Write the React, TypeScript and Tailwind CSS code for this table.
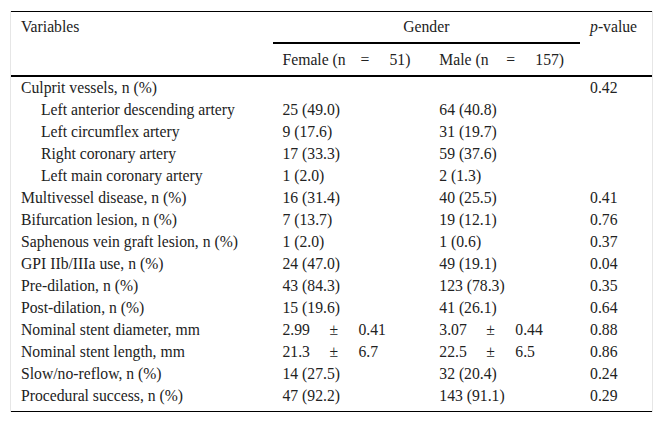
import React from "react";

interface Row {
  label: string;
  female?: string | [string, string];
  male?: string | [string, string];
  p?: string;
  sub?: boolean;
}

const rows: Row[] = [
  { label: "Culprit vessels, n (%)", p: "0.42" },
  { label: "Left anterior descending artery", female: "25 (49.0)", male: "64 (40.8)", sub: true },
  { label: "Left circumflex artery", female: "9 (17.6)", male: "31 (19.7)", sub: true },
  { label: "Right coronary artery", female: "17 (33.3)", male: "59 (37.6)", sub: true },
  { label: "Left main coronary artery", female: "1 (2.0)", male: "2 (1.3)", sub: true },
  { label: "Multivessel disease, n (%)", female: "16 (31.4)", male: "40 (25.5)", p: "0.41" },
  { label: "Bifurcation lesion, n (%)", female: "7 (13.7)", male: "19 (12.1)", p: "0.76" },
  { label: "Saphenous vein graft lesion, n (%)", female: "1 (2.0)", male: "1 (0.6)", p: "0.37" },
  { label: "GPI IIb/IIIa use, n (%)", female: "24 (47.0)", male: "49 (19.1)", p: "0.04" },
  { label: "Pre-dilation, n (%)", female: "43 (84.3)", male: "123 (78.3)", p: "0.35" },
  { label: "Post-dilation, n (%)", female: "15 (19.6)", male: "41 (26.1)", p: "0.64" },
  { label: "Nominal stent diameter, mm", female: ["2.99", "0.41"], male: ["3.07", "0.44"], p: "0.88" },
  { label: "Nominal stent length, mm", female: ["21.3", "6.7"], male: ["22.5", "6.5"], p: "0.86" },
  { label: "Slow/no-reflow, n (%)", female: "14 (27.5)", male: "32 (20.4)", p: "0.24" },
  { label: "Procedural success, n (%)", female: "47 (92.2)", male: "143 (91.1)", p: "0.29" },
];

function Cell({ value }: { value?: string | [string, string] }) {
  if (!value) return null;
  if (typeof value === "string") return <>{value}</>;
  // mean ± sd, spaced out like the source
  return (
    <>
      <span className="inline-block w-[47px]">{value[0]}</span>
      <span className="inline-block w-[29px]">±</span>
      <span>{value[1]}</span>
    </>
  );
}

export default function App() {
  return (
    <div className="min-h-screen bg-white pt-[11px] pl-[10px] font-['Liberation_Serif','Times_New_Roman',serif]">
      <div className="w-[643px] border-x border-[#e6e6e6]">
        <table className="w-full border-collapse text-[15.7px] leading-none text-[#222]">
          <colgroup>
            <col className="w-[262px]" />
            <col className="w-[157px]" />
            <col className="w-[151px]" />
            <col className="w-[72px]" />
          </colgroup>
          <thead>
            <tr className="border-t border-black">
              <th className="h-[31px] pl-[10px] text-left font-normal">Variables</th>
              <th colSpan={2} className="h-[31px] border-b-2 border-black text-center font-normal">
                Gender
              </th>
              <th className="h-[31px] pl-[10px] text-left font-normal">
                <i>p</i>-value
              </th>
            </tr>
            <tr className="border-b-2 border-black">
              <th className="h-[33px]" />
              <th className="h-[33px] pl-[10px] pt-[1px] text-left font-normal">
                <span className="inline-block w-[78px]">Female (n</span>
                <span className="inline-block w-[29px]">=</span>
                <span>51)</span>
              </th>
              <th className="h-[33px] pl-[10px] pt-[1px] text-left font-normal">
                <span className="inline-block w-[67px]">Male (n</span>
                <span className="inline-block w-[29px]">=</span>
                <span>157)</span>
              </th>
              <th className="h-[33px]" />
            </tr>
          </thead>
          <tbody>
            {rows.map((r) => (
              <tr key={r.label}>
                <td className={"h-[22px] leading-[22px] " + (r.sub ? "pl-[30px]" : "pl-[10px]")}>{r.label}</td>
                <td className="h-[22px] pl-[10px] leading-[22px]">
                  <Cell value={r.female} />
                </td>
                <td className="h-[22px] pl-[10px] leading-[22px]">
                  <Cell value={r.male} />
                </td>
                <td className="h-[22px] pl-[10px] leading-[22px]">{r.p}</td>
              </tr>
            ))}
          </tbody>
        </table>
        <div className="mt-[4px] h-[1px] bg-black" />
      </div>
    </div>
  );
}
